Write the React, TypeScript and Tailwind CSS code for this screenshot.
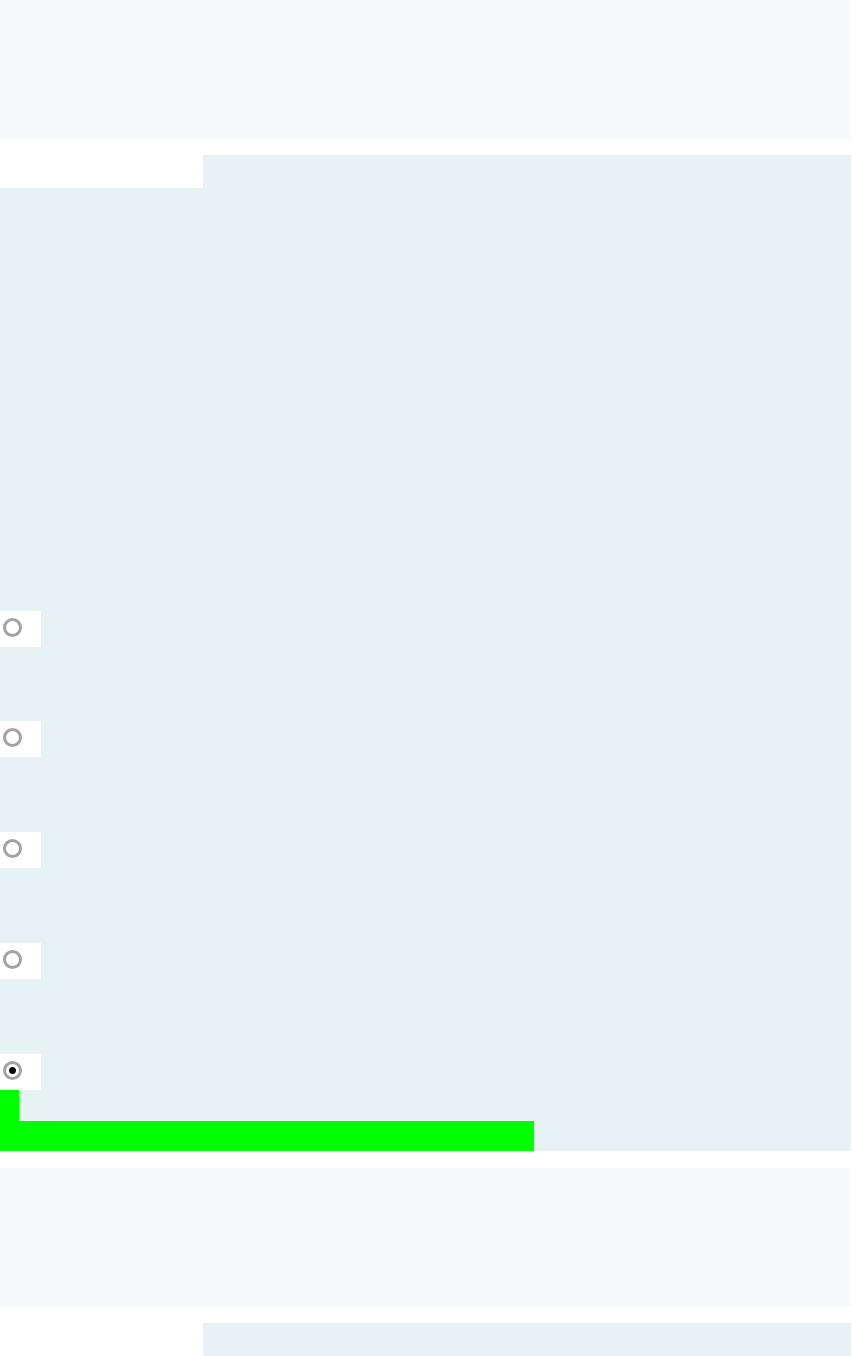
import React from 'react';

const options = ['a', 'b', 'c', 'd', 'e'];

function RadioRow({ checked }: { checked?: boolean }) {
    return (
        <div className="w-[41px] h-[36px] bg-white flex items-start pt-[7px] pl-[3px]">
            <input
                type="radio"
                name="choice"
                defaultChecked={checked}
                className="appearance-none w-[19px] h-[19px] m-0 rounded-full border-[3px] border-[#a3a3a3] bg-white checked:bg-[radial-gradient(circle,#000_0_3px,#fff_4px)]"
            />
        </div>
    );
}

export default function App() {
    return (
        <div className="w-[852px] min-h-[1356px] bg-white overflow-hidden font-['Liberation_Sans',sans-serif]">
            {/* header band */}
            <div className="w-[851px] h-[139px] bg-[#f7f9fa]" />

            {/* question block */}
            <div className="mt-[16px] w-[851px] h-[996px] bg-[#e6f2f4] flex flex-col">
                <div className="w-[203px] h-[33px] bg-white" />

                <div className="mt-[423px] flex flex-col">
                    {options.map((opt, i) => (
                        <div key={opt} className={i === 0 ? '' : i === 1 ? 'mt-[74px]' : 'mt-[75px]'}>
                            <RadioRow checked={i === options.length - 1} />
                        </div>
                    ))}
                </div>

                {/* progress */}
                <div className="w-[19px] h-[31px] bg-[#00ff00]" />
                <div className="w-[534px] h-[30px] bg-[#00ff00]" />
            </div>

            {/* next header band */}
            <div className="mt-[17px] w-[851px] h-[138px] bg-[#f7f9fa]" />

            {/* next question block */}
            <div className="mt-[17px] w-[851px] h-[40px] flex">
                <div className="w-[203px] bg-white" />
                <div className="flex-1 bg-[#e6f2f4]" />
            </div>
        </div>
    );
}
